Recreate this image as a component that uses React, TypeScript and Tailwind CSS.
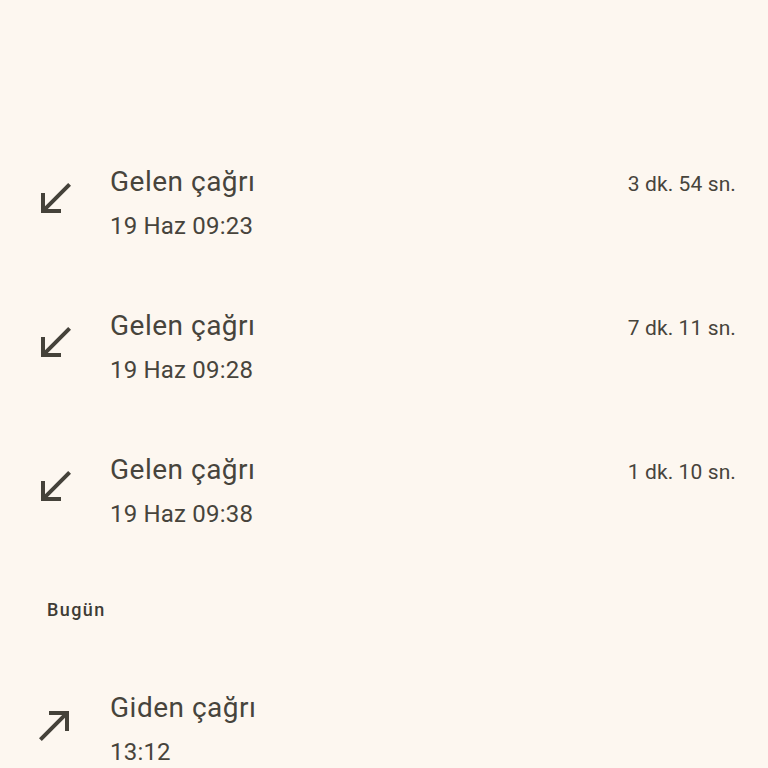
import React from "react";

const In = () => (
  <svg width="48" height="48" viewBox="0 0 24 24" fill="#45423a">
    <path d="M20 5.41L18.59 4 7 15.59V9H5v10h10v-2H8.41z" />
  </svg>
);
const Out = () => (
  <svg width="48" height="48" viewBox="0 0 24 24" fill="#45423a">
    <path d="M9 5v2h6.59L4 18.59 5.41 20 17 8.41V15h2V5z" />
  </svg>
);

function Row({ out, title, sub, dur }: { out?: boolean; title: string; sub: string; dur?: string }) {
  return (
    <div className="h-[144px] flex items-center pl-[31px] pr-[32px]">
      <div className="w-[48px] h-[48px] -mt-[10px] shrink-0">{out ? <Out /> : <In />}</div>
      <div className="ml-[31px] -mt-[2px] flex-1 flex flex-col">
        <div className="flex items-baseline justify-between">
          <span className="text-[28px] leading-[36px] tracking-[0.5px] text-[#47443c]">{title}</span>
          {dur && <span className="text-[21px] tracking-[0.1px] text-[#47443c]">{dur}</span>}
        </div>
        <span className="text-[24px] leading-[32px] tracking-[0.2px] mt-[10px] text-[#47443c]">{sub}</span>
      </div>
    </div>
  );
}

export default function App() {
  return (
    <div className="w-[768px] h-[768px] overflow-hidden bg-[#fdf7f0]" style={{ fontFamily: "Roboto, sans-serif" }}>
      <div className="h-[132px]" />
      <Row title="Gelen çağrı" sub="19 Haz 09:23" dur="3 dk. 54 sn." />
      <Row title="Gelen çağrı" sub="19 Haz 09:28" dur="7 dk. 11 sn." />
      <Row title="Gelen çağrı" sub="19 Haz 09:38" dur="1 dk. 10 sn." />
      <div className="h-[94px] flex items-center pl-[47px]">
        <span className="text-[18px] -mt-[4px] font-medium tracking-[1.4px] text-[#3f3c35]">Bugün</span>
      </div>
      <Row out title="Giden çağrı" sub="13:12" />
    </div>
  );
}
